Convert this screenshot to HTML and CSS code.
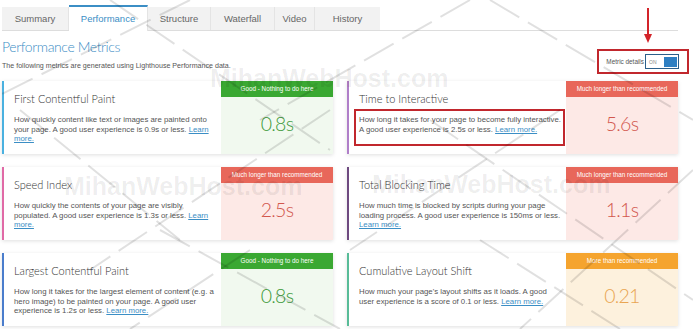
FILE: index.html
```html
<!DOCTYPE html>
<html lang="en">
<head>
    <meta charset="UTF-8">
    <title>Performance Metrics</title>
    <link rel="stylesheet" href="styles.css">
</head>
<body>
    <div class="page">
        <div class="tabs">
            <div class="tab">Summary</div>
            <div class="tab active">Performance</div>
            <div class="tab">Structure</div>
            <div class="tab">Waterfall</div>
            <div class="tab">Video</div>
            <div class="tab">History</div>
        </div>

        <div class="header">
            <div>
                <h1>Performance Metrics</h1>
                <p class="subtitle">The following metrics are generated using Lighthouse Performance data.</p>
            </div>
            <div class="metric-toggle">
                <span>Metric details</span>
                <span class="switch"><span class="switch-label">ON</span><span class="switch-knob"></span></span>
            </div>
        </div>

        <div class="metrics">
            <div class="card fcp">
                <div class="info">
                    <h2>First Contentful Paint</h2>
                    <p>How quickly content like text or images are painted onto your page. A good user experience is 0.9s or less. <a href="#">Learn more.</a></p>
                </div>
                <div class="score good">
                    <div class="score-label">Good - Nothing to do here</div>
                    <div class="score-value">0.8s</div>
                </div>
            </div>

            <div class="card tti">
                <div class="info">
                    <h2>Time to Interactive</h2>
                    <p class="highlight">How long it takes for your page to become fully interactive. A good user experience is 2.5s or less. <a href="#">Learn more.</a></p>
                </div>
                <div class="score bad">
                    <div class="score-label">Much longer than recommended</div>
                    <div class="score-value">5.6s</div>
                </div>
            </div>

            <div class="card si">
                <div class="info">
                    <h2>Speed Index</h2>
                    <p>How quickly the contents of your page are visibly populated. A good user experience is 1.3s or less. <a href="#">Learn more.</a></p>
                </div>
                <div class="score bad">
                    <div class="score-label">Much longer than recommended</div>
                    <div class="score-value">2.5s</div>
                </div>
            </div>

            <div class="card tbt">
                <div class="info">
                    <h2>Total Blocking Time</h2>
                    <p>How much time is blocked by scripts during your page loading process. A good user experience is 150ms or less. <a href="#">Learn more.</a></p>
                </div>
                <div class="score bad">
                    <div class="score-label">Much longer than recommended</div>
                    <div class="score-value">1.1s</div>
                </div>
            </div>

            <div class="card lcp">
                <div class="info">
                    <h2>Largest Contentful Paint</h2>
                    <p>How long it takes for the largest element of content (e.g. a hero image) to be painted on your page. A good user experience is 1.2s or less. <a href="#">Learn more.</a></p>
                </div>
                <div class="score good">
                    <div class="score-label">Good - Nothing to do here</div>
                    <div class="score-value">0.8s</div>
                </div>
            </div>

            <div class="card cls">
                <div class="info">
                    <h2>Cumulative Layout Shift</h2>
                    <p>How much your page's layout shifts as it loads. A good user experience is a score of 0.1 or less. <a href="#">Learn more.</a></p>
                </div>
                <div class="score warn">
                    <div class="score-label">More than recommended</div>
                    <div class="score-value">0.21</div>
                </div>
            </div>
        </div>
    </div>

    <!-- red annotation arrow -->
    <svg class="arrow" width="12" height="36" viewBox="0 0 12 36">
        <line x1="6" y1="0" x2="6" y2="28" stroke="#d3242a" stroke-width="2"/>
        <polygon points="2,26 10,26 6,35" fill="#d3242a"/>
    </svg>

    <!-- watermark -->
    <svg class="watermark-lines" width="693" height="329" viewBox="0 0 693 329">
        <g stroke="rgba(0,0,0,0.12)" stroke-width="2" stroke-dasharray="34 10" fill="none">
            <line x1="190" y1="0" x2="0" y2="95"/>
            <line x1="110" y1="0" x2="330" y2="150"/>
            <line x1="470" y1="0" x2="260" y2="120"/>
            <line x1="490" y1="0" x2="693" y2="120"/>
            <line x1="20" y1="110" x2="180" y2="240"/>
            <line x1="330" y1="110" x2="90" y2="270"/>
            <line x1="560" y1="110" x2="350" y2="250"/>
            <line x1="430" y1="120" x2="693" y2="300"/>
            <line x1="693" y1="170" x2="520" y2="329"/>
            <line x1="250" y1="250" x2="130" y2="329"/>
            <line x1="160" y1="230" x2="340" y2="329"/>
            <line x1="480" y1="240" x2="620" y2="329"/>
        </g>
    </svg>
    <div class="watermark wm-top">MihanWebHost.com</div>
    <div class="watermark wm-left">MihanWebHost.com</div>
    <div class="watermark wm-right">MihanWebHost.com</div>
</body>
</html>
```

FILE: styles.css
```css
body {
    margin: 0;
    background: #fff;
    font-family: "Liberation Sans", Arial, sans-serif;
    color: #555;
    position: relative;
    width: 693px;
    height: 329px;
    overflow: hidden;
}
.page {
    width: 676px;
    margin-left: 2px;
    padding-top: 7px;
}

/* tabs */
.tabs {
    display: flex;
    border-bottom: 1px solid #ddd;
    height: 23px;
}
.tab {
    background: #f2f2f2;
    color: #666;
    font-size: 9.5px;
    line-height: 23px;
    text-align: center;
    border-right: 1px solid #e4e4e4;
}
.tab:nth-child(1) { width: 66px; }
.tab:nth-child(2) { width: 78px; }
.tab:nth-child(3) { width: 62px; }
.tab:nth-child(4) { width: 63px; }
.tab:nth-child(5) { width: 39px; }
.tab:nth-child(6) { width: 65px; border-right: none; }
.tab.active {
    background: #fff;
    color: #3b8ec5;
    border-top: 2px solid #3b8ec5;
    margin-top: -2px;
    height: 24px;
}

/* header */
.header {
    display: flex;
    justify-content: space-between;
    align-items: flex-end;
}
h1 {
    font-family: Lato, sans-serif;
    font-weight: 300;
    font-size: 14px;
    letter-spacing: -0.4px;
    color: #3b8ec5;
    margin: 7px 0 0;
    line-height: 18px;
}
.subtitle {
    font-size: 7.1px;
    color: #555;
    margin: 6px 0 0;
}
.metric-toggle {
    display: flex;
    align-items: center;
    justify-content: flex-end;
    gap: 1px;
    width: 80px;
    height: 21px;
    padding-right: 8px;
    margin-right: -11px;
    margin-bottom: -4px;
    border: 2px solid #c1272d;
    font-size: 6.4px;
    color: #555;
}
.switch {
    display: flex;
    align-items: center;
    justify-content: space-between;
    width: 28px;
    height: 11px;
    padding: 1px 1px 1px 3px;
    border: 1px solid #2b5f8a;
    background: #fff;
}
.switch-label {
    font-size: 5px;
    color: #888;
}
.switch-knob {
    width: 13px;
    height: 10px;
    background: #2e7fc2;
}

/* metric cards */
.metrics {
    display: grid;
    grid-template-columns: 331px 331px;
    column-gap: 14px;
    row-gap: 13px;
    margin-top: 11px;
}
.card {
    display: flex;
    height: 73px;
    background: #fff;
    border-left: 2px solid #4ab1e0;
    box-shadow: 0 1px 4px rgba(0, 0, 0, 0.13);
}
.card.tti { border-left-color: #b07fc9; }
.card.si  { border-left-color: #e06aa6; }
.card.tbt { border-left-color: #6e4a80; }
.card.lcp { border-left-color: #4a7dcc; }
.card.cls { border-left-color: #58bc98; }

.info {
    flex: 1;
    padding: 11px 2px 0 10px;
}
h2 {
    font-family: Lato, sans-serif;
    font-weight: 300;
    font-size: 11px;
    color: #333;
    margin: 0 0 10px;
    line-height: 13px;
}
.info p {
    font-size: 7.8px;
    line-height: 9.7px;
    color: #555;
    margin: 0;
}
.info a {
    color: #3b8ec5;
}
.info p.highlight {
    border: 2px solid #c1272d;
    padding: 4px 1px 10px 3px;
    margin: -6px -1px 0 -5px;
}

.score {
    width: 112px;
    display: flex;
    flex-direction: column;
}
.score-label {
    height: 16px;
    line-height: 16px;
    font-size: 6.3px;
    color: #fff;
    text-align: center;
}
.score-value {
    flex: 1;
    display: flex;
    align-items: center;
    justify-content: center;
    padding-bottom: 4px;
    font-family: Lato, sans-serif;
    font-weight: 300;
    font-size: 19.5px;
    letter-spacing: -0.8px;
}
.good { background: #f1f9ef; }
.good .score-label { background: #3aa832; }
.good .score-value { color: #3d9a3a; }
.bad { background: #fde9e6; }
.bad .score-label { background: #e8675a; }
.bad .score-value { color: #d2574d; }
.warn { background: #fdf1dd; }
.warn .score-label { background: #f5a42e; }
.warn .score-value { color: #e9a552; }

/* annotation + watermark overlays */
.arrow {
    position: absolute;
    left: 642px;
    top: 8px;
}
.watermark-lines {
    position: absolute;
    left: 0;
    top: 0;
    pointer-events: none;
}
.watermark {
    position: absolute;
    font-family: "Liberation Sans", Arial, sans-serif;
    font-weight: bold;
    font-size: 25px;
    color: rgba(0, 0, 0, 0.07);
    pointer-events: none;
    white-space: nowrap;
}
.wm-top { left: 210px; top: 64px; }
.wm-left { left: 64px; top: 172px; }
.wm-right { left: 372px; top: 170px; }
```
